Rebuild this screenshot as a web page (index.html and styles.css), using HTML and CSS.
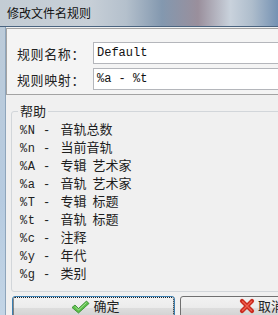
FILE: index.html
```html
<!DOCTYPE html>
<html lang="zh">
<head>
<meta charset="utf-8">
<link rel="stylesheet" href="styles.css">
</head>
<body>
<div class="window">
  <div class="titlebar"><span class="title">修改文件名规则</span></div>
  <div class="frame">
    <div class="frame-left"></div>
    <div class="client">
      <div class="panel">
        <div class="row"><span class="label">规则名称：</span><div class="input">Default</div></div>
        <div class="row"><span class="label">规则映射：</span><div class="input">%a - %t</div></div>
      </div>
      <fieldset class="help">
        <legend>帮助</legend>
        <div class="item"><span class="code">%N - </span><span class="desc">音轨总数</span></div>
        <div class="item"><span class="code">%n - </span><span class="desc">当前音轨</span></div>
        <div class="item"><span class="code">%A - </span><span class="desc">专辑 艺术家</span></div>
        <div class="item"><span class="code">%a - </span><span class="desc">音轨 艺术家</span></div>
        <div class="item"><span class="code">%T - </span><span class="desc">专辑 标题</span></div>
        <div class="item"><span class="code">%t - </span><span class="desc">音轨 标题</span></div>
        <div class="item"><span class="code">%c - </span><span class="desc">注释</span></div>
        <div class="item"><span class="code">%y - </span><span class="desc">年代</span></div>
        <div class="item"><span class="code">%g - </span><span class="desc">类别</span></div>
      </fieldset>
      <div class="buttons">
        <button class="btn btn-default">
          <svg class="icon" width="19" height="14" viewBox="0 0 19 14"><path d="M1 7.5 L4 5 L7.5 8.5 L15.5 1 L18 3.5 L7.5 13 Z" fill="#5cc04a" stroke="#2f8527" stroke-width="0.8" stroke-linejoin="round"/><path d="M4 6.5 L7.5 10 L15.5 2.5" fill="none" stroke="#b4eaa6" stroke-width="0.8"/></svg>
          <span class="btn-text">确定</span>
        </button>
        <button class="btn">
          <svg class="icon" width="16" height="16" viewBox="0 0 16 16"><path d="M3 3 L13 13 M13 3 L3 13" stroke="#c92a1e" stroke-width="4.2" stroke-linecap="round"/><path d="M3.5 3.5 L12.5 12.5 M12.5 3.5 L3.5 12.5" stroke="#f0604f" stroke-width="1.4" stroke-linecap="round"/></svg>
          <span class="btn-text">取消</span>
        </button>
      </div>
    </div>
  </div>
</div>
</body>
</html>
```
FILE: styles.css
```css
html, body {
  margin: 0;
  padding: 0;
  overflow: hidden;
  width: 278px;
  height: 315px;
  background: #f0f0f0;
}
.window {
  width: 360px;
  height: 315px;
  display: flex;
  flex-direction: column;
  overflow: hidden;
  font-family: "Noto Sans CJK SC", "Noto Sans", sans-serif;
  color: #1e1e1e;
}
.titlebar {
  flex: none;
  height: 26px;
  border-bottom: 1px solid #4a6480;
  background: linear-gradient(90deg, #c3ccd4 0%, #c7cfd7 25%, #b4c0cc 35%, #8398af 45%, #9a8f9c 55%, #c9d2dc 64%, #aebdcc 70%, #6f8db0 78%, #6a89ad 88%, #a9c2dc 96%, #c0d4e8 100%);
  display: flex;
  align-items: center;
  padding-left: 7px;
}
.title {
  font-size: 12px;
  line-height: 14px;
  color: #111;
}
.frame {
  flex: 1;
  min-height: 0;
  display: flex;
}
.frame-left {
  flex: none;
  width: 5px;
  border-right: 1px solid #8ea5bb;
  background: linear-gradient(180deg, #bccbd9, #b6cbe0 60%, #c3d5e6);
}
.client {
  flex: 1;
  background: #f0f0f0;
  padding-top: 1px;
}
.panel {
  border: 1px solid #a3a3a3;
  border-right: none;
  background: #f4f4f4;
  padding: 13px 0 4px 10px;
  display: flex;
  flex-direction: column;
  gap: 4px;
}
.row {
  display: flex;
  align-items: center;
  height: 22px;
}
.label {
  width: 76px;
  font-size: 13px;
  letter-spacing: 0.6px;
  color: #222;
}
.input {
  flex: 1;
  height: 20px;
  border: 1px solid #b4b6bb;
  border-right: none;
  background: #fff;
  padding-left: 3px;
  font-family: "Liberation Mono", monospace;
  font-size: 12px;
  line-height: 20px;
  color: #111;
}
.help {
  margin: 8px 30px 0 5px;
  padding: 1px 0 9px 8px;
  border: 1px solid #d2d6da;
  border-radius: 3px;
  min-width: 0;
}
.help legend {
  padding: 0 2px;
  margin-left: -2px;
  font-size: 13px;
  line-height: 16px;
  color: #222;
}
.item {
  height: 18px;
  line-height: 18px;
  white-space: pre;
  font-size: 13px;
}
.code {
  font-family: "Liberation Mono", monospace;
  font-size: 12px;
  letter-spacing: 0.5px;
}
.desc {
  margin-left: 2px;
  word-spacing: 3px;
}
.buttons {
  display: flex;
  gap: 5px;
  margin: 4px 0 0 6px;
}
.btn {
  width: 163px;
  height: 24px;
  flex: none;
  border: 1px solid #707070;
  border-radius: 3px;
  background: linear-gradient(180deg, #f2f2f2 0%, #ebebeb 50%, #dddddd 51%, #cfcfcf 100%);
  display: flex;
  align-items: flex-start;
  justify-content: center;
  gap: 3px;
  padding: 2px 0 0;
  font-family: "Noto Sans CJK SC", "Noto Sans", sans-serif;
  font-size: 13px;
  line-height: 14px;
  color: #222;
}
.btn-text {
  line-height: 14px;
}
.btn-default {
  border-color: #3c7fb1;
  outline: 1px dotted #222;
  outline-offset: -2px;
  padding-left: 4px;
}
.icon {
  flex: none;
  margin-top: 1px;
}
.btn .icon[width="16"] {
  margin-top: -1px;
}
```
